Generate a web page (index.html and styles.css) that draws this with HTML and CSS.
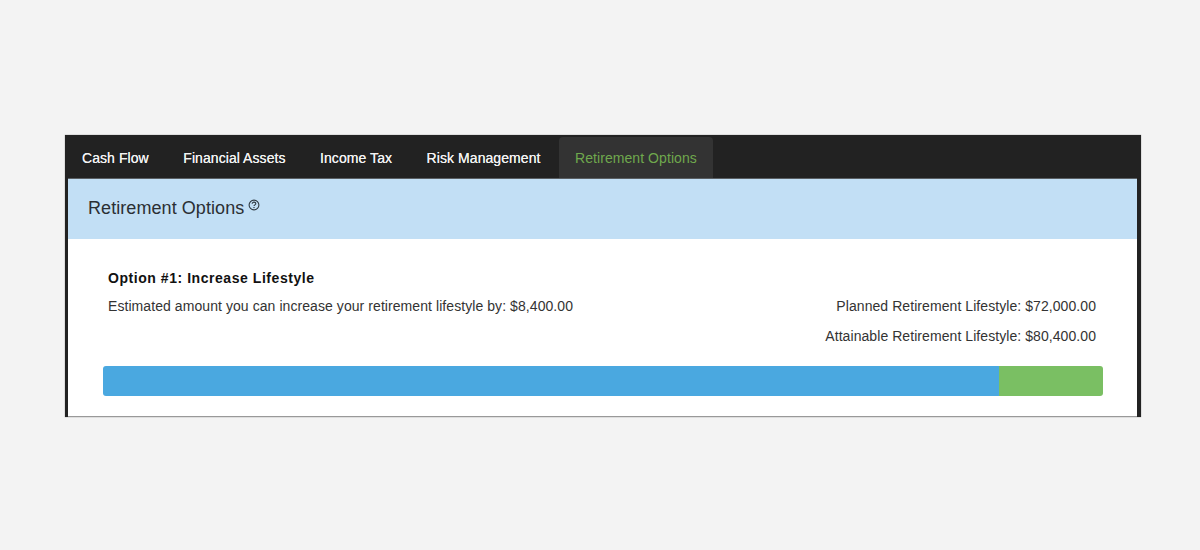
FILE: index.html
```html
<!DOCTYPE html>
<html lang="en">
<head>
<meta charset="utf-8">
<title>Retirement Options</title>
<link rel="stylesheet" href="styles.css">
</head>
<body>
<main class="frame">
  <nav class="tabs">
    <a class="tab">Cash Flow</a>
    <a class="tab">Financial Assets</a>
    <a class="tab">Income Tax</a>
    <a class="tab">Risk Management</a>
    <a class="tab active">Retirement Options</a>
  </nav>
  <section class="panel">
    <header class="panel-head">
      <h1 class="panel-title">Retirement Options</h1>
      <svg class="help" viewBox="0 0 12 12" width="12" height="12" aria-hidden="true">
        <circle cx="6" cy="6" r="4.9" fill="none" stroke="#2f3a42" stroke-width="1.1"/>
        <path d="M4.2 4.8C4.2 3.7 5 3.1 6 3.1s1.8.6 1.8 1.5c0 1.3-1.8 1.2-1.8 2.5" fill="none" stroke="#2f3a42" stroke-width="1.1"/>
        <rect x="5.4" y="8" width="1.2" height="1.1" fill="#2f3a42"/>
      </svg>
    </header>
    <div class="panel-body">
      <div class="option">
        <div class="option-left">
          <h2 class="option-title">Option #1: Increase Lifestyle</h2>
          <p class="line">Estimated amount you can increase your retirement lifestyle by: $8,400.00</p>
        </div>
        <div class="option-right">
          <p class="line">Planned Retirement Lifestyle: $72,000.00</p>
          <p class="line">Attainable Retirement Lifestyle: $80,400.00</p>
        </div>
      </div>
      <div class="bar">
        <div class="bar-fill planned"></div>
        <div class="bar-fill extra"></div>
      </div>
    </div>
  </section>
</main>
</body>
</html>
```

FILE: styles.css
```css
* { box-sizing: border-box; }
html, body { margin: 0; height: 100%; }
body {
  background: #f3f3f3;
  padding: 135px 59px 0 65px;
  font-family: "Liberation Sans", Arial, sans-serif;
  letter-spacing: 0.07px;
  overflow: hidden;
}
.frame {
  background: #222;
  padding: 2px 4px 0 3px;
  height: 282px;
  box-shadow: 0 0 1px #777;
  display: flex;
  flex-direction: column;
}
.tabs { display: flex; height: 41px; padding-left: 14px; }
.tab {
  display: flex;
  align-items: center;
  padding: 0 17px;
  margin-left: -17px;
  margin-right: 17.5px;
  color: #f2f2f2;
  font-size: 14px;
  text-shadow: 0 0 0.6px #f2f2f2;
  border-radius: 4px 4px 0 0;
}
.tab.active { background: #333; color: #6fa84d; text-shadow: none; padding: 0 16px; margin-left: -16px; }
.panel {
  flex: 1;
  background: #fff;
  border-bottom: 1px solid #999;
  border-top: 1px solid #5a5f63;
  display: flex;
  flex-direction: column;
}
.panel-head {
  height: 60px;
  background: #c2dff5;
  display: flex;
  align-items: center;
  gap: 4px;
  padding: 0 0 2px 20px;
}
.panel-title { margin: 0; font-size: 18px; font-weight: 400; color: #2b2f33; }
.help { margin-bottom: 6px; }
.panel-body { padding: 30px 34px 0 35px; }
.option { display: flex; justify-content: space-between; padding: 0 7px 0 5px; }
.option-title { margin: 0 0 9px; font-size: 14px; line-height: 18px; font-weight: 700; color: #111; letter-spacing: 0.55px; }
.line { margin: 0; font-size: 14px; line-height: 20px; color: #333; }
.option-right { text-align: right; padding-top: 27px; display: flex; flex-direction: column; gap: 10px; }
.bar { display: flex; height: 30px; margin-top: 20px; border-radius: 3px; overflow: hidden; }
.bar-fill.planned { width: 89.6%; background: #4aa8e0; }
.bar-fill.extra { flex: 1; background: #7abf63; }
```
